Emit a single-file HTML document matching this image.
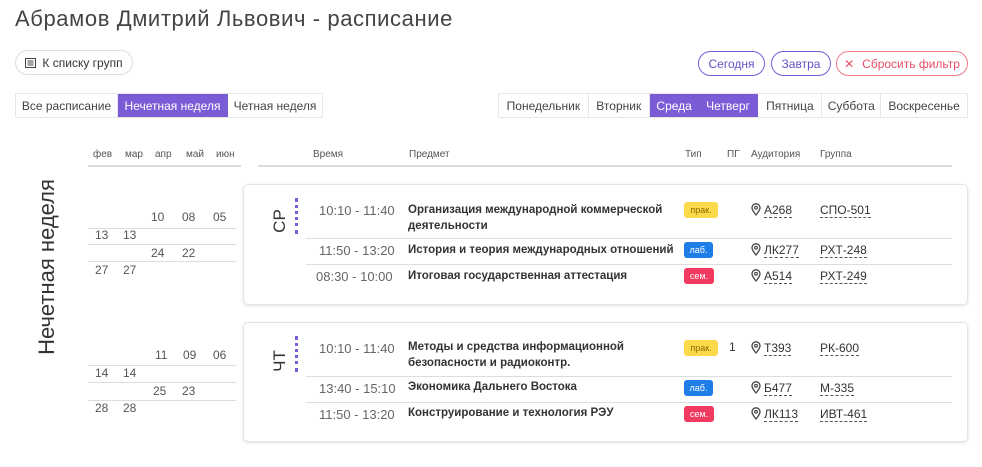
<!DOCTYPE html>
<html><head><meta charset="utf-8"><style>
*{margin:0;padding:0;box-sizing:border-box}
body{width:982px;height:467px;background:#fff;font-family:"Liberation Sans","DejaVu Sans",sans-serif;color:#333;position:relative;overflow:hidden}
.a{position:absolute;white-space:nowrap}
.btn{position:absolute;height:25px;border-radius:13px;font-size:12px;display:flex;align-items:center;justify-content:center;background:#fff}
.seg{position:absolute;height:25px;display:flex;border:1px solid #e6e6e6;border-radius:2px;font-size:12px}
.seg div{display:flex;align-items:center;justify-content:center;border-right:1px solid #e6e6e6;color:#444}
.seg div:last-child{border-right:none}
.seg .on{background:#7c5bd6;color:#fff;border-right-color:#7c5bd6}
.hd{font-size:10px;color:#555;line-height:12px}
.line{position:absolute;height:1px;background:#ddd}
.line2{position:absolute;height:2px;background:#ddd}
.d{font-size:12px;color:#555;line-height:14px}
.card{position:absolute;left:243px;width:725px;border:1px solid #e4e4e4;border-radius:5px;box-shadow:0 1px 3px rgba(0,0,0,.12)}
.t{font-size:13px;color:#666;line-height:15px}
.s{font-size:11.5px;font-weight:bold;color:#333;line-height:16px}
.b{position:absolute;height:16px;border-radius:3px;font-size:9px;display:flex;align-items:center;justify-content:center}
.r{font-size:12px;color:#333;line-height:14px;border-bottom:1px dashed #555}
.dots{position:absolute;width:3px;border-left:3px dotted #7c5bd6}
.rot{position:absolute;transform:rotate(-90deg);transform-origin:center;font-size:17px;color:#333}
</style></head><body>
<div class="a" style="left:15px;top:6px;font-size:22px;color:#444;letter-spacing:0.6px">Абрамов Дмитрий Львович - расписание</div>

<div class="btn" style="left:15px;top:50px;width:118px;border:1px solid #ddd"><svg width="11" height="10" viewBox="0 0 11 10" style="margin-right:6px"><rect x="0.5" y="0.5" width="10" height="9" fill="none" stroke="#444"/><path d="M2.5 3h6M2.5 5h6M2.5 7h6" stroke="#444"/></svg>К списку групп</div>

<div class="seg" style="left:15px;top:93px;width:308px">
<div style="width:102px">Все расписание</div><div class="on" style="width:110px">Нечетная неделя</div><div style="width:94px">Четная неделя</div></div>

<div class="btn" style="left:698px;top:51px;width:67px;border:1px solid #7c5bd6;color:#6a4fc9">Сегодня</div>
<div class="btn" style="left:771px;top:51px;width:60px;border:1px solid #7c5bd6;color:#6a4fc9">Завтра</div>
<div class="btn" style="left:836px;top:51px;width:132px;border:1px solid #f07a8a;color:#e84f66"><span style="margin-right:8px">✕</span>Сбросить фильтр</div>

<div class="seg" style="left:498px;top:93px;width:470px">
<div style="width:90px">Понедельник</div><div style="width:61px">Вторник</div><div class="on" style="width:49px;border-right:none">Среда</div><div class="on" style="width:60px">Четверг</div><div style="width:64px">Пятница</div><div style="width:59px">Суббота</div><div style="width:86px">Воскресенье</div></div>

<div class="a hd" style="left:93px;top:149px">фев</div>
<div class="a hd" style="left:125px;top:149px">мар</div>
<div class="a hd" style="left:155px;top:149px">апр</div>
<div class="a hd" style="left:186px;top:149px">май</div>
<div class="a hd" style="left:216px;top:149px">июн</div>
<div class="line2" style="left:88px;top:165px;width:153px"></div>
<div class="a hd" style="left:313px;top:149px">Время</div>
<div class="a hd" style="left:409px;top:149px">Предмет</div>
<div class="a hd" style="left:685px;top:149px">Тип</div>
<div class="a hd" style="left:727px;top:149px">ПГ</div>
<div class="a hd" style="left:751px;top:149px">Аудитория</div>
<div class="a hd" style="left:820px;top:149px">Группа</div>
<div class="line2" style="left:258px;top:165px;width:694px"></div>

<div class="a" style="left:-42px;top:254px;width:178px;text-align:center;font-size:22px;color:#333;transform:rotate(-90deg)">Нечетная неделя</div>

<div class="a d" style="left:151px;top:210px">10</div><div class="a d" style="left:182px;top:210px">08</div><div class="a d" style="left:213px;top:210px">05</div>
<div class="line" style="left:88px;top:228px;width:148px"></div>
<div class="a d" style="left:95px;top:228px">13</div><div class="a d" style="left:123px;top:228px">13</div>
<div class="line" style="left:88px;top:244px;width:148px"></div>
<div class="a d" style="left:151px;top:246px">24</div><div class="a d" style="left:182px;top:246px">22</div>
<div class="line" style="left:88px;top:261px;width:148px"></div>
<div class="a d" style="left:95px;top:263px">27</div><div class="a d" style="left:123px;top:263px">27</div>
<div class="a d" style="left:155px;top:348px">11</div><div class="a d" style="left:183px;top:348px">09</div><div class="a d" style="left:213px;top:348px">06</div>
<div class="line" style="left:88px;top:365px;width:148px"></div>
<div class="a d" style="left:95px;top:366px">14</div><div class="a d" style="left:123px;top:366px">14</div>
<div class="line" style="left:88px;top:382px;width:148px"></div>
<div class="a d" style="left:153px;top:384px">25</div><div class="a d" style="left:182px;top:384px">23</div>
<div class="line" style="left:88px;top:400px;width:148px"></div>
<div class="a d" style="left:95px;top:401px">28</div><div class="a d" style="left:123px;top:401px">28</div>

<div class="card" style="top:184px;height:121px"></div>
<div class="rot" style="left:267px;top:211px;width:26px;text-align:center">СР</div>
<div class="dots" style="left:295px;top:198px;height:36px"></div>
<div class="a t" style="left:319px;top:203px">10:10 - 11:40</div>
<div class="a s" style="left:408px;top:202px">Организация международной коммерческой<br>деятельности</div>
<div class="b" style="left:684px;top:202px;width:34px;background:#fcd94a;color:#8a6d00">прак.</div>
<div class="line" style="left:306px;top:238px;width:646px"></div>
<div class="a t" style="left:319px;top:243px">11:50 - 13:20</div>
<div class="a s" style="left:408px;top:242px">История и теория международных отношений</div>
<div class="b" style="left:684px;top:242px;width:29px;background:#1e7ee8;color:#fff">лаб.</div>
<div class="line" style="left:306px;top:264px;width:646px"></div>
<div class="a t" style="left:316px;top:269px">08:30 - 10:00</div>
<div class="a s" style="left:408px;top:268px">Итоговая государственная аттестация</div>
<div class="b" style="left:684px;top:268px;width:30px;background:#f03a5f;color:#fff">сем.</div>

<div class="card" style="top:322px;height:120px"></div>
<div class="rot" style="left:267px;top:351px;width:26px;text-align:center">ЧТ</div>
<div class="dots" style="left:295px;top:336px;height:36px"></div>
<div class="a t" style="left:319px;top:341px">10:10 - 11:40</div>
<div class="a s" style="left:408px;top:339px">Методы и средства информационной<br>безопасности и радиоконтр.</div>
<div class="b" style="left:684px;top:340px;width:34px;background:#fcd94a;color:#8a6d00">прак.</div>
<div class="a d" style="left:729px;top:340px;color:#333">1</div>
<div class="line" style="left:306px;top:376px;width:646px"></div>
<div class="a t" style="left:319px;top:381px">13:40 - 15:10</div>
<div class="a s" style="left:408px;top:379px">Экономика Дальнего Востока</div>
<div class="b" style="left:684px;top:380px;width:29px;background:#1e7ee8;color:#fff">лаб.</div>
<div class="line" style="left:306px;top:402px;width:646px"></div>
<div class="a t" style="left:319px;top:407px">11:50 - 13:20</div>
<div class="a s" style="left:408px;top:405px">Конструирование и технология РЭУ</div>
<div class="b" style="left:684px;top:406px;width:30px;background:#f03a5f;color:#fff">сем.</div>

<svg class="a" style="left:751px;top:203px" width="10" height="13" viewBox="0 0 10 13"><path d="M5 12C2 8.5 1 6.5 1 4.8a4 4 0 0 1 8 0C9 6.5 8 8.5 5 12z" fill="none" stroke="#444" stroke-width="1.3"/><circle cx="5" cy="4.8" r="1.4" fill="none" stroke="#444" stroke-width="1.1"/></svg>
<div class="a r" style="left:764px;top:203px">А268</div><div class="a r" style="left:820px;top:203px">СПО-501</div>
<svg class="a" style="left:751px;top:243px" width="10" height="13" viewBox="0 0 10 13"><path d="M5 12C2 8.5 1 6.5 1 4.8a4 4 0 0 1 8 0C9 6.5 8 8.5 5 12z" fill="none" stroke="#444" stroke-width="1.3"/><circle cx="5" cy="4.8" r="1.4" fill="none" stroke="#444" stroke-width="1.1"/></svg>
<div class="a r" style="left:764px;top:243px">ЛК277</div><div class="a r" style="left:820px;top:243px">РХТ-248</div>
<svg class="a" style="left:751px;top:269px" width="10" height="13" viewBox="0 0 10 13"><path d="M5 12C2 8.5 1 6.5 1 4.8a4 4 0 0 1 8 0C9 6.5 8 8.5 5 12z" fill="none" stroke="#444" stroke-width="1.3"/><circle cx="5" cy="4.8" r="1.4" fill="none" stroke="#444" stroke-width="1.1"/></svg>
<div class="a r" style="left:764px;top:269px">А514</div><div class="a r" style="left:820px;top:269px">РХТ-249</div>
<svg class="a" style="left:751px;top:341px" width="10" height="13" viewBox="0 0 10 13"><path d="M5 12C2 8.5 1 6.5 1 4.8a4 4 0 0 1 8 0C9 6.5 8 8.5 5 12z" fill="none" stroke="#444" stroke-width="1.3"/><circle cx="5" cy="4.8" r="1.4" fill="none" stroke="#444" stroke-width="1.1"/></svg>
<div class="a r" style="left:764px;top:341px">Т393</div><div class="a r" style="left:820px;top:341px">РК-600</div>
<svg class="a" style="left:751px;top:381px" width="10" height="13" viewBox="0 0 10 13"><path d="M5 12C2 8.5 1 6.5 1 4.8a4 4 0 0 1 8 0C9 6.5 8 8.5 5 12z" fill="none" stroke="#444" stroke-width="1.3"/><circle cx="5" cy="4.8" r="1.4" fill="none" stroke="#444" stroke-width="1.1"/></svg>
<div class="a r" style="left:764px;top:381px">Б477</div><div class="a r" style="left:820px;top:381px">М-335</div>
<svg class="a" style="left:751px;top:407px" width="10" height="13" viewBox="0 0 10 13"><path d="M5 12C2 8.5 1 6.5 1 4.8a4 4 0 0 1 8 0C9 6.5 8 8.5 5 12z" fill="none" stroke="#444" stroke-width="1.3"/><circle cx="5" cy="4.8" r="1.4" fill="none" stroke="#444" stroke-width="1.1"/></svg>
<div class="a r" style="left:764px;top:407px">ЛК113</div><div class="a r" style="left:820px;top:407px">ИВТ-461</div>
</body></html>
